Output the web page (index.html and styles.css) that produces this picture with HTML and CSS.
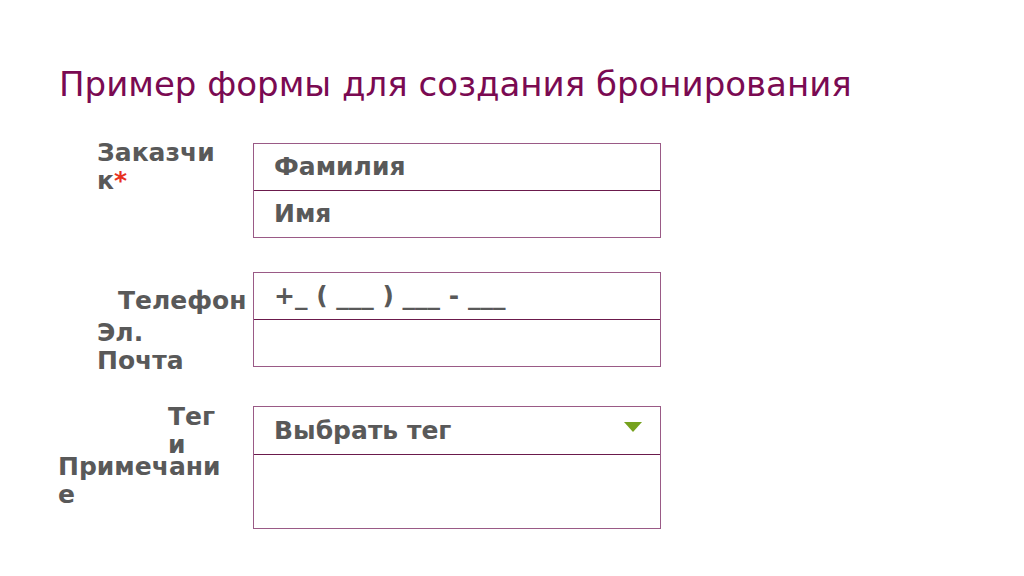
FILE: index.html
```html
<!DOCTYPE html>
<html lang="ru">
  <head>
    <meta charset="UTF-8" />
    <meta name="viewport" content="width=device-width, initial-scale=1.0" />
    <title>Бронирование</title>
    <link rel="stylesheet" href="styles.css">
  </head>
  <body>
    <h1 class="title">Пример формы для создания бронирования</h1>

    <div class="form">
      <div class="group group-customer">
        <div class="labels">
          <div class="label label-customer">Заказчик<span class="req">*</span></div>
        </div>
        <div class="box">
          <div class="row">Фамилия</div>
          <div class="row">Имя</div>
        </div>
      </div>

      <div class="group group-contacts">
        <div class="labels">
          <div class="label label-phone">Телефон</div>
          <div class="label label-mail">Эл. Почта</div>
        </div>
        <div class="box">
          <div class="row">+_ ( ___ ) ___ - ___</div>
          <div class="row"></div>
        </div>
      </div>

      <div class="group group-tags">
        <div class="labels">
          <div class="label label-tags">Теги</div>
          <div class="label label-note">Примечание</div>
        </div>
        <div class="box">
          <div class="row row-select">
            <span>Выбрать тег</span>
            <span class="arrow"></span>
          </div>
          <div class="row row-note"></div>
        </div>
      </div>
    </div>
  </body>
</html>
```

FILE: styles.css
```css
* {
  margin: 0;
  padding: 0;
  box-sizing: border-box;
}
body {
  width: 1024px;
  height: 576px;
  background: #fff;
  font-family: "DejaVu Sans", sans-serif;
  color: #595959;
  padding: 0 0 0 58px;
  overflow: hidden;
}
.title {
  font-size: 34px;
  font-weight: normal;
  color: #7a0a52;
  line-height: 40px;
  padding-top: 64px;
  margin-left: 1px;
}
.form {
  padding-top: 39px;
}
.group {
  display: flex;
  align-items: flex-start;
}
.group-contacts {
  margin-top: 34px;
}
/* подписи второй группы выходят ниже рамки */
.group-tags {
  margin-top: 31px;
}
.labels {
  width: 195px;
  display: flex;
  flex-direction: column;
}
.label {
  font-size: 25px;
  font-weight: bold;
  line-height: 28px;
  overflow-wrap: anywhere;
}
.label-customer {
  width: 128px;
  margin-left: 39px;
  margin-top: -4px;
}
.req {
  color: #e8321e;
}
.label-phone {
  margin-left: 60px;
  margin-top: 15px;
}
.label-mail {
  width: 100px;
  margin-left: 39px;
  margin-top: 4px;
}
.label-tags {
  width: 58px;
  margin-left: 110px;
  margin-top: -3px;
}
.label-note {
  width: 172px;
  margin-top: -6px;
}
.box {
  width: 408px;
  border: 1px solid #9a5a86;
}
.row {
  box-sizing: content-box;
  height: 46px;
  padding-left: 20px;
  font-size: 25px;
  font-weight: bold;
  line-height: 46px;
  white-space: nowrap;
}
.row + .row {
  border-top: 1px solid #6b1a4c;
}
.row-select {
  display: flex;
  justify-content: space-between;
  align-items: center;
  padding-right: 18px;
  height: 47px;
}
.arrow {
  width: 0;
  height: 0;
  border-left: 9px solid transparent;
  border-right: 9px solid transparent;
  border-top: 10px solid #76a21e;
  margin-top: -8px;
}
.row-note {
  height: 73px;
}
```
